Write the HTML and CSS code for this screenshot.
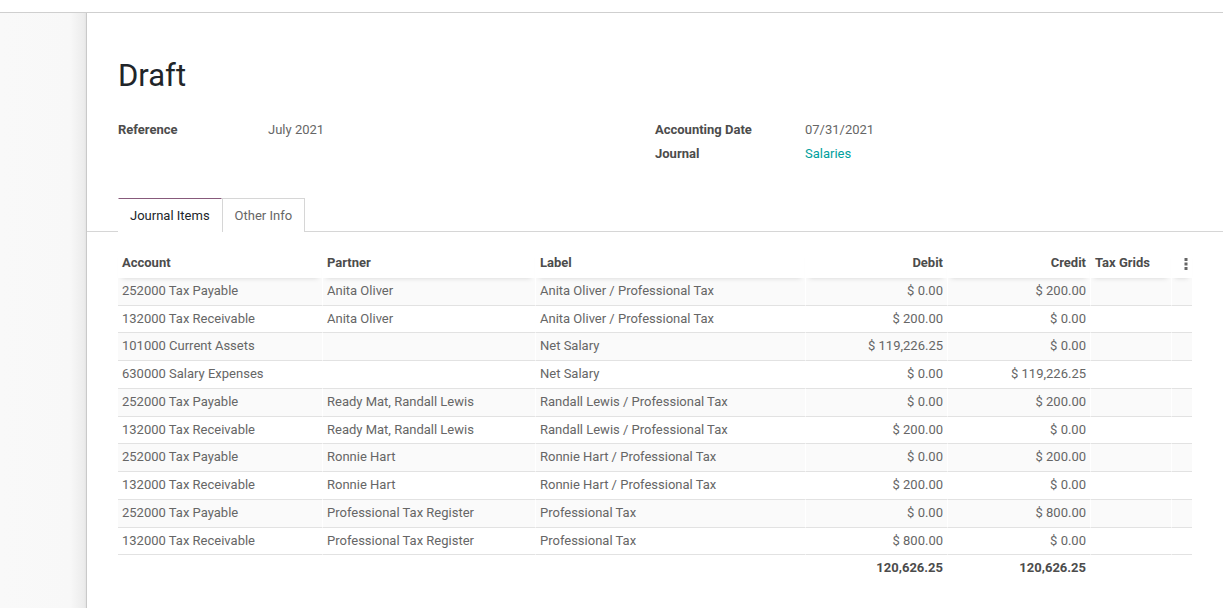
FILE: index.html
```html
<!DOCTYPE html>
<html>
<head>
<meta charset="utf-8">
<link rel="stylesheet" href="styles.css">
</head>
<body>
<div class="topbar"></div>
<div class="main">
  <aside class="side"></aside>
  <section class="sheet">
    <h1 class="title">Draft</h1>
    <div class="fields">
      <div class="group">
        <div class="field"><span class="lbl">Reference</span><span class="val">July 2021</span></div>
      </div>
      <div class="group">
        <div class="field"><span class="lbl">Accounting Date</span><span class="val">07/31/2021</span></div>
        <div class="field"><span class="lbl">Journal</span><span class="val link">Salaries</span></div>
      </div>
    </div>
    <nav class="tabs">
      <div class="tab active">Journal Items</div>
      <div class="tab">Other Info</div>
    </nav>
    <table class="lines">
      <colgroup>
        <col class="c-acc"><col class="c-par"><col class="c-lab"><col class="c-deb"><col class="c-cre"><col class="c-tax"><col class="c-opt">
      </colgroup>
      <thead>
        <tr>
          <th>Account</th><th>Partner</th><th>Label</th><th class="num">Debit</th><th class="num">Credit</th><th>Tax Grids</th>
          <th class="opt"><svg width="4" height="12" viewBox="0 0 4 12"><rect x="0.5" y="0" width="3" height="3" fill="#666"/><rect x="0.5" y="4.5" width="3" height="3" fill="#666"/><rect x="0.5" y="9" width="3" height="3" fill="#666"/></svg></th>
        </tr>
      </thead>
      <tbody>
        <tr><td>252000 Tax Payable</td><td>Anita Oliver</td><td>Anita Oliver / Professional Tax</td><td class="num">$ 0.00</td><td class="num">$ 200.00</td><td></td><td></td></tr>
        <tr><td>132000 Tax Receivable</td><td>Anita Oliver</td><td>Anita Oliver / Professional Tax</td><td class="num">$ 200.00</td><td class="num">$ 0.00</td><td></td><td></td></tr>
        <tr><td>101000 Current Assets</td><td></td><td>Net Salary</td><td class="num">$ 119,226.25</td><td class="num">$ 0.00</td><td></td><td></td></tr>
        <tr><td>630000 Salary Expenses</td><td></td><td>Net Salary</td><td class="num">$ 0.00</td><td class="num">$ 119,226.25</td><td></td><td></td></tr>
        <tr><td>252000 Tax Payable</td><td>Ready Mat, Randall Lewis</td><td>Randall Lewis / Professional Tax</td><td class="num">$ 0.00</td><td class="num">$ 200.00</td><td></td><td></td></tr>
        <tr><td>132000 Tax Receivable</td><td>Ready Mat, Randall Lewis</td><td>Randall Lewis / Professional Tax</td><td class="num">$ 200.00</td><td class="num">$ 0.00</td><td></td><td></td></tr>
        <tr><td>252000 Tax Payable</td><td>Ronnie Hart</td><td>Ronnie Hart / Professional Tax</td><td class="num">$ 0.00</td><td class="num">$ 200.00</td><td></td><td></td></tr>
        <tr><td>132000 Tax Receivable</td><td>Ronnie Hart</td><td>Ronnie Hart / Professional Tax</td><td class="num">$ 200.00</td><td class="num">$ 0.00</td><td></td><td></td></tr>
        <tr><td>252000 Tax Payable</td><td>Professional Tax Register</td><td>Professional Tax</td><td class="num">$ 0.00</td><td class="num">$ 800.00</td><td></td><td></td></tr>
        <tr><td>132000 Tax Receivable</td><td>Professional Tax Register</td><td>Professional Tax</td><td class="num">$ 800.00</td><td class="num">$ 0.00</td><td></td><td></td></tr>
      </tbody>
      <tfoot>
        <tr><td></td><td></td><td></td><td class="num">120,626.25</td><td class="num">120,626.25</td><td></td><td></td></tr>
      </tfoot>
    </table>
  </section>
</div>
</body>
</html>
```
FILE: styles.css
```css
html, body {
  margin: 0;
  padding: 0;
  height: 100%;
  overflow: hidden;
}
body {
  font-family: Roboto, "Liberation Sans", sans-serif;
  font-size: 13px;
  color: #666666;
  background: #ffffff;
  display: flex;
  flex-direction: column;
}
.topbar {
  height: 12px;
  flex: none;
  border-bottom: 1px solid #cfcfcf;
  background: #ffffff;
}
.main {
  flex: 1;
  display: flex;
  min-height: 0;
}
.side {
  width: 86px;
  flex: none;
  background: linear-gradient(to right, #f9f9f9 0, #f8f8f8 70px, #ececec 84px, #e4e4e4 86px);
}
.sheet {
  flex: 1;
  border-left: 1px solid #c9c9c9;
  background: #ffffff;
  padding: 44px 31px 0 31px;
}
.title {
  margin: 0;
  font-size: 31px;
  font-weight: 400;
  line-height: 37px;
  color: #212529;
}
.fields {
  display: flex;
  margin-top: 24px;
}
.group {
  flex: 1;
  display: flex;
  flex-direction: column;
}
.field {
  display: flex;
  line-height: 24px;
}
.lbl {
  width: 150px;
  font-weight: 700;
  color: #4c4c4c;
}
.val {
  color: #666666;
}
.link {
  color: #00a09d;
}
.tabs {
  display: flex;
  margin: 32px -31px 0 -31px;
  padding-left: 31px;
  border-bottom: 1px solid #d6d6d6;
}
.tab {
  padding: 1px 12px 0 12px;
  line-height: 31px;
  border: 1px solid #d6d6d6;
  border-bottom: none;
  margin-bottom: -1px;
  color: #666666;
  background: #ffffff;
}
.tab.active {
  padding: 1px 11px 0 11px;
  color: #212529;
  border-color: transparent;
  border-top-color: #875a7b;
  border-bottom: 1px solid #ffffff;
}
.tab.active + .tab {
  border-left-color: #d6d6d6;
}
.lines {
  width: 1074px;
  margin-top: 18px;
  border-collapse: separate;
  border-spacing: 0;
  table-layout: fixed;
}
.c-acc { width: 204px; }
.c-par { width: 213px; }
.c-lab { width: 270px; }
.c-deb { width: 142px; }
.c-cre { width: 143px; }
.c-tax { width: 81px; }
.c-opt { width: 21px; }
.lines th, .lines td {
  padding: 4px 4px;
  line-height: 18.75px;
  text-align: left;
  white-space: nowrap;
  overflow: hidden;
}
.lines th {
  font-weight: 700;
  color: #4c4c4c;
  position: relative;
  background: #ffffff;
  border-bottom: 1px solid #ffffff;
  border-left: 1px solid #ffffff;
  box-shadow: 0 4px 5px -4px rgba(0, 0, 0, 0.16);
}
.lines td {
  border-bottom: 1px solid #e2e2e2;
  border-left: 1px solid #ffffff;
}
.lines th:first-child, .lines td:first-child {
  border-left: none;
}
.lines tbody tr:nth-child(odd) td {
  background: #fafafa;
}
.lines .num {
  text-align: right;
}
.lines th.opt {
  text-align: right;
  padding-right: 4px;
  vertical-align: middle;
}
.lines th.opt svg {
  display: inline-block;
  vertical-align: middle;
}
.lines tfoot td {
  border-bottom: none;
  font-weight: 700;
  color: #4c4c4c;
}
```
